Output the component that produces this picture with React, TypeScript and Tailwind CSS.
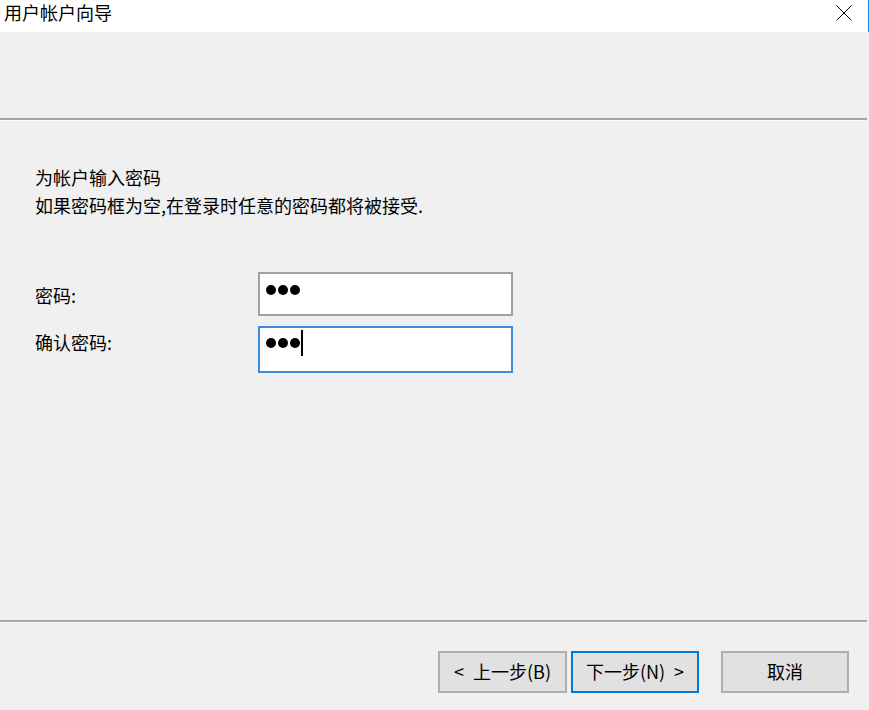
import React from "react";

const font = { fontFamily: '"Noto Sans CJK SC", "Noto Sans", sans-serif' };

function Dots() {
  return (
    <div className="flex items-center gap-[2px]">
      <span className="w-[10px] h-[10px] rounded-full bg-black" />
      <span className="w-[10px] h-[10px] rounded-full bg-black" />
      <span className="w-[10px] h-[10px] rounded-full bg-black" />
    </div>
  );
}

function Separator() {
  return (
    <div className="mr-[2px]">
      <div className="h-[2px] bg-[#a6a6a6]" />
      <div className="h-[1px] bg-[#fbfbfb]" />
    </div>
  );
}

export default function App() {
  return (
    <div
      className="w-[869px] h-[710px] bg-[#f0f0f0] flex flex-col text-[18px] text-black overflow-hidden"
      style={font}
    >
      {/* title bar */}
      <div className="h-8 bg-white border-r border-[#1883d7] flex items-start justify-between pl-1">
        <span className="leading-[25px]">用户帐户向导</span>
        <svg width="16" height="16" viewBox="0 0 16 16" className="mt-[5px] mr-[16px]">
          <path d="M0.5 0.5 L15.5 15.5 M15.5 0.5 L0.5 15.5" stroke="#000" strokeWidth="1" fill="none" />
        </svg>
      </div>

      {/* header area */}
      <div className="h-[86px]" />
      <Separator />

      {/* content */}
      <div className="flex-1 flex flex-col pl-[35px] pt-[42px]">
        <div className="leading-[28px]">
          <p>为帐户输入密码</p>
          <p>如果密码框为空,在登录时任意的密码都将被接受.</p>
        </div>

        <div className="mt-[53px] flex flex-col gap-[10px]">
          <div className="flex items-start">
            <span className="w-[223px] leading-[28px] mt-[9px]">密码:</span>
            <div className="w-[255px] h-[44px] bg-white border-2 border-[#a0a0a0] flex items-start pl-[6px] pt-[11px]">
              <Dots />
            </div>
          </div>
          <div className="flex items-start">
            <span className="w-[223px] leading-[28px] mt-[2px]">确认密码:</span>
            <div className="w-[255px] h-[47px] bg-white border-2 border-[#3a8ee0] flex items-start pl-[6px] pt-[2px]">
              <div className="flex items-center h-[26px]">
                <Dots />
                <span className="w-[2px] h-[26px] bg-black ml-[1px]" />
              </div>
            </div>
          </div>
        </div>
      </div>

      <Separator />

      {/* footer */}
      <div className="h-[87px] flex items-start justify-end pt-[28px] pr-[20px]">
        <button className="w-[129px] h-[42px] bg-[#e1e1e1] border-2 border-[#adadad] leading-none pb-[3px]">
          &lt;<span className="ml-[9px]">上一步(B)</span>
        </button>
        <button className="w-[128px] h-[42px] ml-[4px] bg-[#e1e1e1] border-2 border-[#0078d7] leading-none pb-[3px]">
          下一步(N)<span className="ml-[9px]">&gt;</span>
        </button>
        <button className="w-[128px] h-[42px] ml-[22px] bg-[#e1e1e1] border-2 border-[#adadad] leading-none pb-[3px]">
          取消
        </button>
      </div>
    </div>
  );
}
